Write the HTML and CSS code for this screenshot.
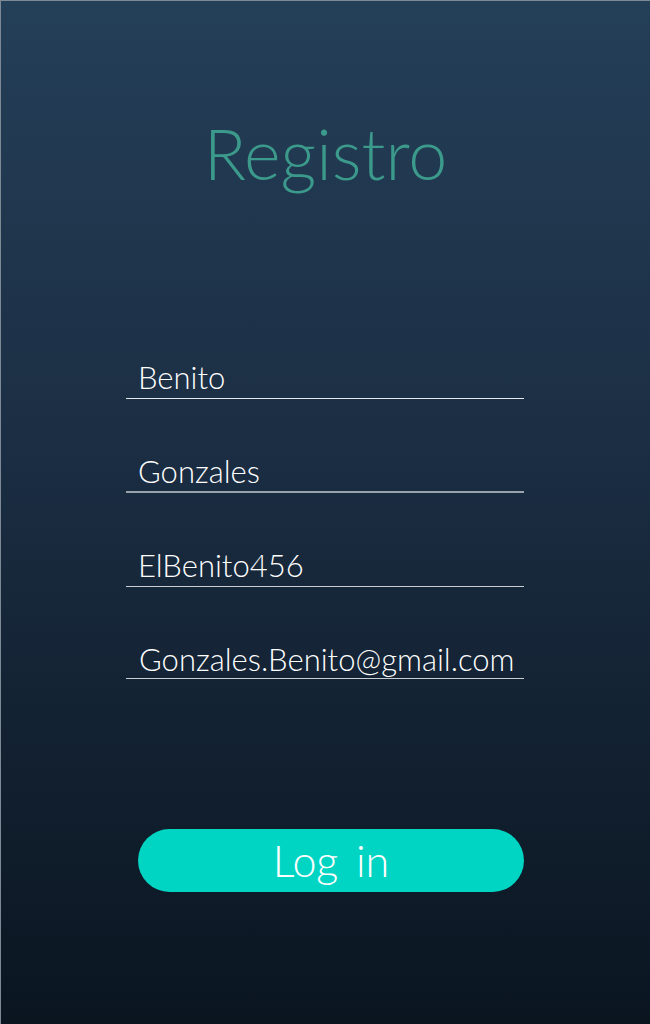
FILE: index.html
```html
<!DOCTYPE html>
<html lang="es">
<head>
<meta charset="utf-8">
<title>Registro</title>
<link rel="stylesheet" href="styles.css">
</head>
<body>
<main class="screen">
  <h1 class="title">Registro</h1>
  <form class="form">
    <div class="field field-first">Benito</div>
    <div class="field field-gray">Gonzales</div>
    <div class="field field-light">ElBenito456</div>
    <div class="field field-light field-email">Gonzales.Benito@gmail.com</div>
  </form>
  <button class="btn" type="button">Log in</button>
</main>
</body>
</html>
```
FILE: styles.css
```css
html, body {
  margin: 0;
  padding: 0;
  background: #0b1621;
}
.screen {
  box-sizing: border-box;
  width: 650px;
  height: 1024px;
  border-top: 1px solid #7d8a96;
  border-left: 1px solid #7d8a96;
  background: linear-gradient(to bottom, #243f58 0%, #1c2f45 40%, #0a1520 100%);
  display: flex;
  flex-direction: column;
  font-family: Lato, "Open Sans", sans-serif;
}
.title {
  margin: 110px 0 0 0;
  text-align: center;
  font-weight: 300;
  font-size: 70px;
  line-height: 84px;
  color: #3c9a8c;
  letter-spacing: 0;
}
.form {
  margin: 162px 0 0 125px;
  width: 398px;
  display: flex;
  flex-direction: column;
  gap: 52px;
}
.field {
  box-sizing: border-box;
  height: 42px;
  padding-left: 12px;
  color: #ffffff;
  font-weight: 300;
  font-size: 31px;
  line-height: 40px;
  border-bottom: 1px solid #e6e9ec;
}
.field-gray {
  border-bottom: 2px solid #9aa3ab;
}
.field-light {
  border-bottom: 1px solid #c9ced3;
}
.field-light.field-email {
  padding-left: 13px;
  height: 40px;
}
.btn {
  margin: 150px 0 0 137px;
  width: 386px;
  height: 63px;
  border: none;
  border-radius: 32px;
  background: #00d5c4;
  color: #ffffff;
  font-family: Lato, "Open Sans", sans-serif;
  font-weight: 300;
  font-size: 43px;
  line-height: 63px;
  padding: 0;
  word-spacing: 6px;
}
```
